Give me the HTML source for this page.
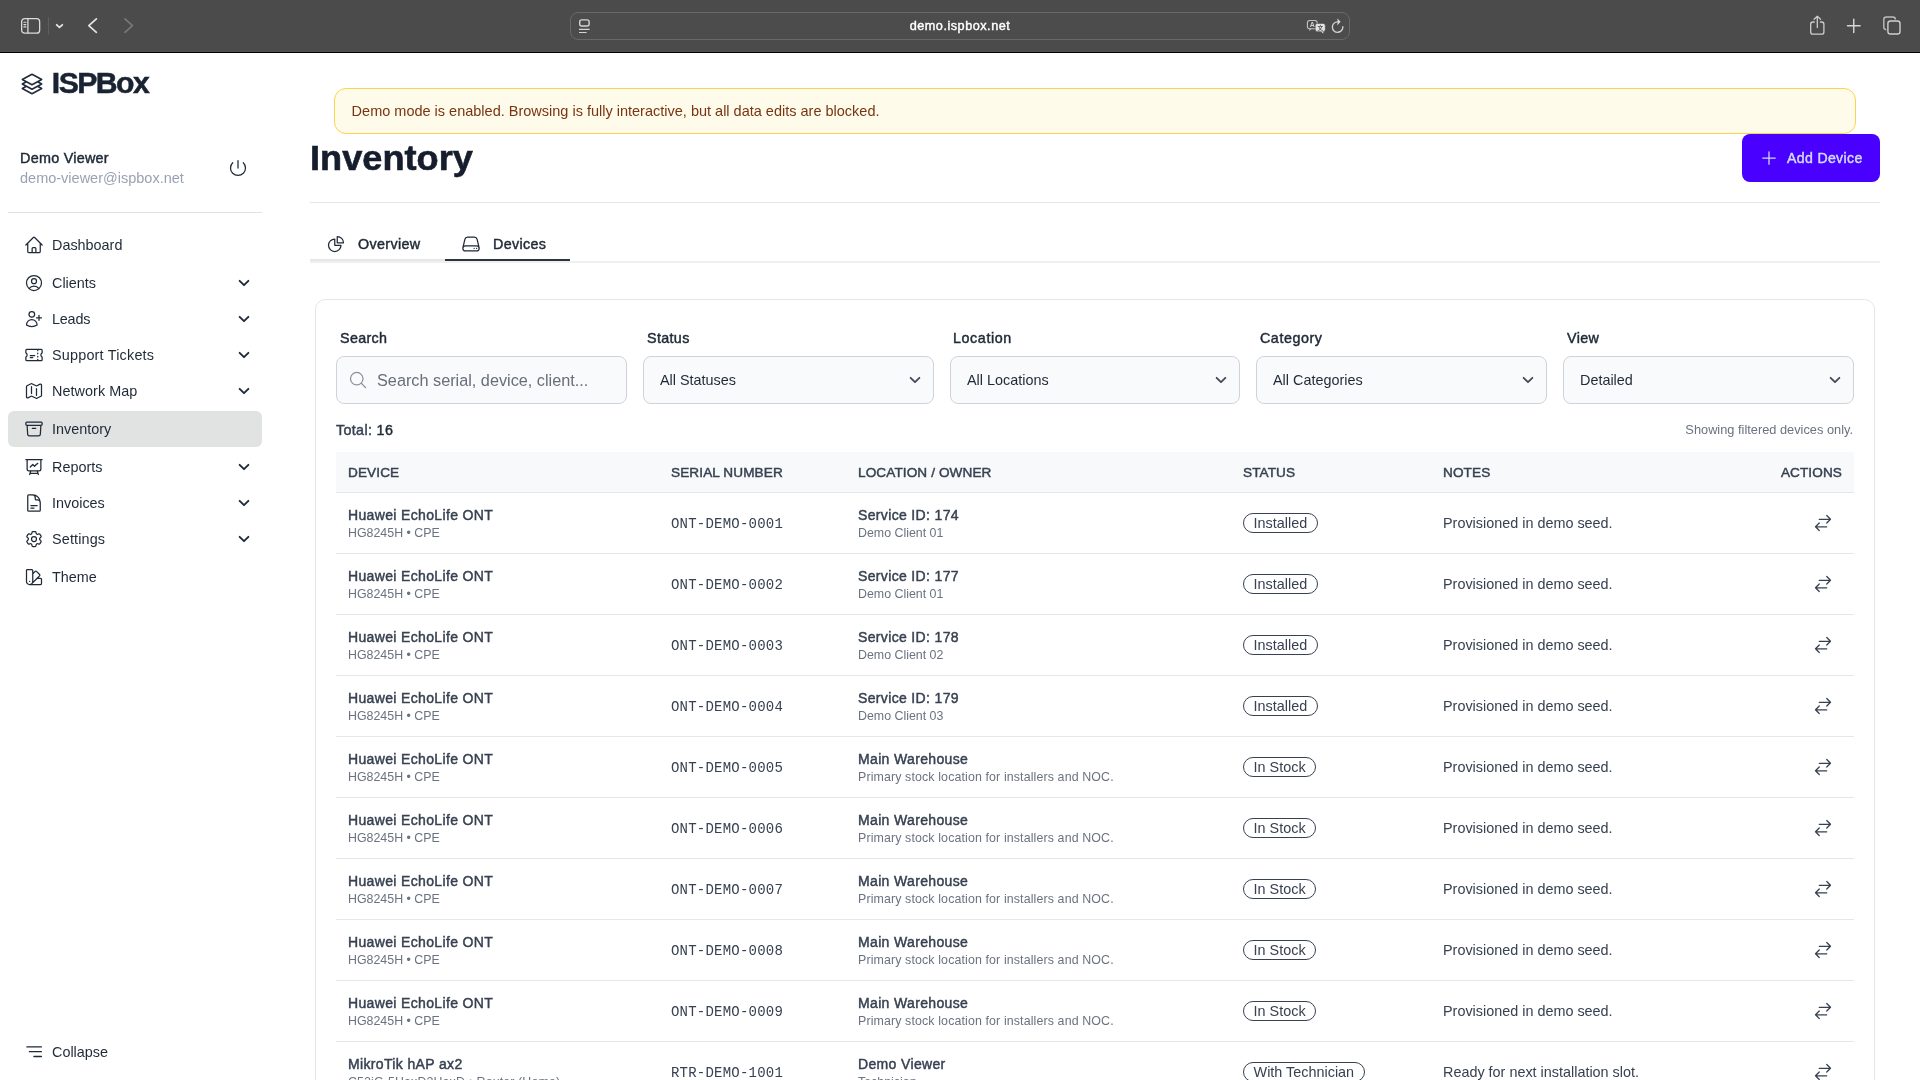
<!DOCTYPE html>
<html lang="en">
<head>
<meta charset="utf-8">
<title>Inventory - ISPBox</title>
<style>
*{box-sizing:border-box;margin:0;padding:0}
html,body{width:1920px;height:1080px;overflow:hidden;background:#fff}
body{font-family:"Liberation Sans",Arial,sans-serif;color:#1f2937;font-size:14px;position:relative;will-change:transform}
.abs{position:absolute}
svg{display:block}
.ico{fill:none;stroke:currentColor;stroke-width:1.5;stroke-linecap:round;stroke-linejoin:round}
/* browser chrome */
#chrome{position:absolute;left:0;top:0;width:1920px;height:53px;background:#4b4b4b;border-bottom:1px solid #000;box-shadow:inset 0 -1px 0 #515151}
#urlbar{position:absolute;left:570px;top:12px;width:780px;height:28px;border-radius:8px;background:#4c4c4c;border:1px solid #686868}
#url{position:absolute;left:570px;top:13px;width:780px;height:26px;line-height:26px;text-align:center;color:#fff;font-size:12.7px;font-weight:400;-webkit-text-stroke:.4px #fff;letter-spacing:.5px}
/* sidebar */
#logo{position:absolute;left:51.8px;top:63.5px;font-size:30.2px;line-height:38px;font-weight:700;letter-spacing:-1.55px;-webkit-text-stroke:.5px;color:#1a2332;white-space:nowrap}
.nav{position:absolute;left:8px;width:254px;height:36px;border-radius:6px;color:#1f2937}
.nav svg.ico{position:absolute;left:16px;top:8px;width:20px;height:20px}
.nav span{position:absolute;left:44px;top:0;line-height:36px;font-size:14.4px;white-space:nowrap}
.nav svg.chev{position:absolute;left:229px;top:11px;width:14px;height:14px;fill:none;stroke:#1f2937;stroke-width:3.2;stroke-linecap:round;stroke-linejoin:round}
.nav.active{background:#e1e3e2}

/* main */
#banner{position:absolute;left:334px;top:88px;width:1522px;height:46px;border-radius:12px;background:#fffbeb;border:1px solid #fcd34d;color:#78350f;font-size:14.5px;line-height:44px;padding-left:16.6px;white-space:nowrap}
#h1{position:absolute;left:310px;top:135.4px;font-size:34.4px;line-height:46px;font-weight:700;color:#161e2d;letter-spacing:0;-webkit-text-stroke:.6px;transform:scaleX(1.052);transform-origin:0 0;white-space:nowrap}
#addbtn{position:absolute;left:1742px;top:134px;width:138px;height:48px;border-radius:8px;background:#4a00ff;color:#d1dbff}
#addbtn span{position:absolute;left:45px;top:0;line-height:48px;font-size:14.1px;font-weight:400;-webkit-text-stroke:.45px;letter-spacing:.35px;white-space:nowrap}
.tab{position:absolute;top:226px;height:35px;border-bottom:2px solid #e6e7e7;font-size:14.3px;font-weight:400;-webkit-text-stroke:.45px;letter-spacing:.35px;color:#1f2937}
.tab svg{position:absolute;top:8px;width:20px;height:20px}
.tab span{position:absolute;top:0;line-height:36px;white-space:nowrap}
#card{position:absolute;left:315px;top:299px;width:1560px;height:800px;border:1px solid #e4e6eb;border-radius:10.5px;background:#fff}
.lbl{position:absolute;top:328px;line-height:20px;font-size:14.3px;font-weight:400;-webkit-text-stroke:.45px;letter-spacing:.35px;color:#1f2937;white-space:nowrap}
.inp{position:absolute;top:356px;width:291px;height:48px;border-radius:8px;border:1px solid #cfd3d9;background:#f9fafb;color:#1f2937}
.inp span{position:absolute;left:16px;top:0;line-height:46px;font-size:14.4px;white-space:nowrap}
.inp svg.chev{position:absolute;left:264px;top:16px;width:14px;height:14px;fill:none;stroke:#434a58;stroke-width:3.1;stroke-linecap:round;stroke-linejoin:round}

/* table */
#thead{position:absolute;left:336px;top:452px;width:1518px;height:41px;background:#f8f9fb;border-bottom:1px solid #e5e7eb}
#thead div{position:absolute;top:0;line-height:41px;font-size:13.6px;font-weight:400;-webkit-text-stroke:.45px;letter-spacing:.1px;color:#374151;white-space:nowrap}
.row{position:absolute;left:336px;width:1518px;height:61px;border-bottom:1px solid #e5e7eb}
.row div{position:absolute;white-space:nowrap}
.row .d1{left:12px;top:12px;line-height:20px;font-size:14px;font-weight:400;-webkit-text-stroke:.45px;letter-spacing:.35px;color:#374151}
.row .d2{left:12px;top:32px;line-height:16px;font-size:12.4px;color:#6b7280}
.row .sn{left:335px;top:21px;line-height:20px;font-size:14px;letter-spacing:.215px;font-family:"Liberation Mono","DejaVu Sans Mono",monospace;color:#374151}
.row .l1{left:522px;top:12px;line-height:20px;font-size:14px;font-weight:400;-webkit-text-stroke:.45px;letter-spacing:.35px;color:#374151}
.row .l2{left:522px;top:32px;line-height:16px;font-size:12.4px;color:#6b7280}
.row .bd{left:907px;top:20px;height:20px;border:1px solid #374151;border-radius:10px;line-height:18px;font-size:14.4px;color:#374151;padding:0 9.6px}
.row .nt{left:1107px;top:20px;line-height:20px;font-size:14.4px;color:#374151}
.row svg{position:absolute;left:1477px;top:20px;width:20px;height:20px;color:#374151}
.row .w{letter-spacing:.125px}
</style>
</head>
<body>
<!-- BROWSER CHROME -->
<div id="chrome">
  <svg class="abs" style="left:20px;top:17px" width="22" height="18" viewBox="0 0 22 18" fill="none" stroke="#dcdcdc" stroke-width="1.3"><rect x="1.65" y="1.65" width="18" height="14.5" rx="3"/><path d="M7.900 1.650v14.500"/><path d="M3.900 5.300h2M3.900 7.600h2M3.900 9.900h2" stroke-width="1.100" stroke-linecap="round"/></svg>
  <div class="abs" style="left:48px;top:17px;width:1px;height:18px;background:#5e5e5e"></div>
  <svg class="abs" style="left:55px;top:23px" width="9" height="6" viewBox="0 0 9 6" fill="none" stroke="#e4e4e4" stroke-width="1.8" stroke-linecap="round" stroke-linejoin="round"><path d="M1.700 1.800 4.500 4.300 7.300 1.800"/></svg>
  <svg class="abs" style="left:86px;top:17px" width="13" height="18" viewBox="0 0 13 18" fill="none" stroke="#e4e4e4" stroke-width="1.7" stroke-linecap="round" stroke-linejoin="round"><path d="M10.400 1.800 2.800 8.550l7.600 6.750"/></svg>
  <svg class="abs" style="left:122px;top:17px" width="13" height="18" viewBox="0 0 13 18" fill="none" stroke="#787878" stroke-width="1.7" stroke-linecap="round" stroke-linejoin="round"><path d="M2.900 1.800 10.500 8.550l-7.600 6.750"/></svg>
  <div id="urlbar"></div>
  <div id="url">demo.ispbox.net</div>
  <svg class="abs" style="left:578px;top:18px" width="14" height="17" viewBox="0 0 14 17" fill="none" stroke="#d4d4d4"><rect x="1.700" y="1.900" width="9.400" height="6.100" rx="1.900" stroke-width="1.400"/><path d="M1 11.400h10.600M1 14.500h7.600" stroke-width="1.200"/></svg>
  <svg class="abs" style="left:1306px;top:19px" width="21" height="16" viewBox="0 0 21 16" fill="none"><rect x="1.400" y="1.500" width="9.700" height="8.300" rx="2.200" stroke="#c4c4c4" stroke-width="1.100"/><path d="M3.300 9.800v2.100l2.300-2.100Z" fill="#c4c4c4"/><text x="6.250" y="8.300" font-family="Liberation Sans,sans-serif" font-size="7" font-weight="700" fill="#d0d0d0" text-anchor="middle">A</text><rect x="9.200" y="4.400" width="10.100" height="8.300" rx="2.200" fill="#e4e4e4" stroke="#4b4b4b" stroke-width=".6"/><path d="M17.300 12.500v2.100l-2.600-2.100Z" fill="#e4e4e4"/><text x="14.250" y="10.700" font-family="Noto Sans CJK SC,sans-serif" font-size="5.600" font-weight="700" fill="#555" text-anchor="middle">文</text></svg>
  <svg class="abs" style="left:1330px;top:17px" width="16" height="18" viewBox="0 0 16 18" fill="none"><path d="M12.850 9.700A5.250 5.250 0 1 1 7.600 4.800" stroke="#d2d2d2" stroke-width="1.350" stroke-linecap="round"/><path d="M7.200 1.200 10.500 4.700 7.200 8.400 7.900 4.800Z" fill="#dedede"/></svg>
  <svg class="abs" style="left:1808px;top:14px" width="19" height="22" viewBox="0 0 19 22" fill="none" stroke="#cdcdcd" stroke-width="1.300" stroke-linecap="round" stroke-linejoin="round"><path d="M6.300 8H4.900a2.200 2.200 0 0 0-2.200 2.200v7.800a2.200 2.200 0 0 0 2.200 2.200h8.800a2.200 2.200 0 0 0 2.200-2.200v-7.800A2.200 2.200 0 0 0 13.700 8H12.400"/><path d="M9.300 13.600V2.200M6.100 5.300 9.300 2.100l3.200 3.200"/></svg>
  <svg class="abs" style="left:1846px;top:18px" width="16" height="16" viewBox="0 0 16 16" fill="none" stroke="#d6d6d6" stroke-width="1.450" stroke-linecap="round"><path d="M7.750 1.200v13.400M1.500 7.800h12.600"/></svg>
  <svg class="abs" style="left:1882px;top:15px" width="20" height="21" viewBox="0 0 20 21" fill="none" stroke-linejoin="round"><rect x="1.800" y="2" width="11.600" height="12.700" rx="2.600" stroke="#bdbdbd" stroke-width="1.400"/><rect x="5.900" y="6" width="12.100" height="13" rx="2.600" fill="#4b4b4b" stroke="#4b4b4b" stroke-width="3.200"/><rect x="5.900" y="6" width="12.100" height="13" rx="2.600" stroke="#cfcfcf" stroke-width="1.400"/></svg>
</div>

<!-- SIDEBAR -->
<svg class="ico abs" style="left:20px;top:72px;width:24px;height:24px;color:#1f2937;stroke-width:1.45" viewBox="0 0 24 24"><path d="M6.429 9.75 2.25 12l4.179 2.25m0-4.5 5.571 3 5.571-3m-11.142 0L2.25 7.5 12 2.25l9.750 5.25-4.179 2.25m0 0L21.750 12l-4.179 2.25m0 0 4.179 2.250L12 21.750 2.250 16.500l4.179-2.250m11.142 0-5.571 3-5.571-3"/></svg>
<div id="logo">ISPBox</div>
<div class="abs" style="left:20px;top:148px;font-size:14.4px;line-height:20px;font-weight:400;-webkit-text-stroke:.45px;letter-spacing:.25px;color:#1f2937;white-space:nowrap">Demo Viewer</div>
<div class="abs" style="left:20px;top:168px;font-size:14.5px;line-height:20px;color:#9aa2b1;white-space:nowrap">demo-viewer@ispbox.net</div>
<svg class="ico abs" style="left:228px;top:158px;width:20px;height:20px;color:#1f2937" viewBox="0 0 24 24"><path d="M5.636 5.636a9 9 0 1 0 12.728 0M12 3v9"/></svg>
<div class="abs" style="left:8px;top:212px;width:254px;height:1px;background:#dfe2ea"></div>

<div class="nav" style="top:227px"><svg class="ico" viewBox="0 0 24 24"><path d="m2.250 12 8.954-8.955c.44-.439 1.152-.439 1.591 0L21.750 12M4.500 9.750v10.125c0 .621.504 1.125 1.125 1.125H9.750v-4.875c0-.621.504-1.125 1.125-1.125h2.250c.621 0 1.125.504 1.125 1.125V21h4.125c.621 0 1.125-.504 1.125-1.125V9.750M8.250 21h8.250"/></svg><span>Dashboard</span></div>
<div class="nav" style="top:265px"><svg class="ico" viewBox="0 0 24 24"><path d="M17.982 18.725A7.488 7.488 0 0 0 12 15.750a7.488 7.488 0 0 0-5.982 2.975m11.963 0a9 9 0 1 0-11.963 0m11.963 0A8.966 8.966 0 0 1 12 21a8.966 8.966 0 0 1-5.982-2.275M15 9.750a3 3 0 1 1-6 0 3 3 0 0 1 6 0Z"/></svg><span>Clients</span><svg class="chev" viewBox="0 0 24 24"><path d="m19.500 8.250-7.500 7.500-7.500-7.500"/></svg></div>
<div class="nav" style="top:301px"><svg class="ico" viewBox="0 0 24 24"><path d="M18 7.500v3m0 0v3m0-3h3m-3 0h-3m-2.250-4.125a3.375 3.375 0 1 1-6.750 0 3.375 3.375 0 0 1 6.750 0ZM3 19.235v-.110a6.375 6.375 0 0 1 12.750 0v.109A12.318 12.318 0 0 1 9.374 21c-2.331 0-4.512-.645-6.374-1.766Z"/></svg><span style="letter-spacing:-.2px">Leads</span><svg class="chev" viewBox="0 0 24 24"><path d="m19.500 8.250-7.500 7.500-7.500-7.500"/></svg></div>
<div class="nav" style="top:337px"><svg class="ico" viewBox="0 0 24 24"><path d="M16.500 6v.750m0 3v.750m0 3v.750m0 3V18m-9-5.250h5.250M7.500 15h3M3.375 5.250c-.621 0-1.125.504-1.125 1.125v3.026a2.999 2.999 0 0 1 0 5.198v3.026c0 .621.504 1.125 1.125 1.125h17.250c.621 0 1.125-.504 1.125-1.125v-3.026a2.999 2.999 0 0 1 0-5.198V6.375c0-.621-.504-1.125-1.125-1.125H3.375Z"/></svg><span style="letter-spacing:.2px">Support Tickets</span><svg class="chev" viewBox="0 0 24 24"><path d="m19.500 8.250-7.500 7.500-7.500-7.500"/></svg></div>
<div class="nav" style="top:373px"><svg class="ico" viewBox="0 0 24 24"><path d="M9 6.750V15m6-6v8.250m.503 3.498 4.875-2.437c.381-.190.622-.580.622-1.006V4.820c0-.836-.880-1.380-1.628-1.006l-3.869 1.934c-.317.159-.690.159-1.006 0L9.503 3.252a1.125 1.125 0 0 0-1.006 0L3.622 5.689C3.240 5.880 3 6.270 3 6.695V19.180c0 .836.880 1.380 1.628 1.006l3.869-1.934c.317-.159.690-.159 1.006 0l4.994 2.497c.317.158.690.158 1.006 0Z"/></svg><span style="letter-spacing:.06px">Network Map</span><svg class="chev" viewBox="0 0 24 24"><path d="m19.500 8.250-7.500 7.500-7.500-7.500"/></svg></div>
<div class="nav active" style="top:411px"><svg class="ico" viewBox="0 0 24 24"><path d="m20.250 7.500-.625 10.632a2.250 2.250 0 0 1-2.247 2.118H6.622a2.250 2.250 0 0 1-2.247-2.118L3.750 7.500M10 11.250h4M3.375 7.500h17.250c.621 0 1.125-.504 1.125-1.125v-1.500c0-.621-.504-1.125-1.125-1.125H3.375c-.621 0-1.125.504-1.125 1.125v1.500c0 .621.504 1.125 1.125 1.125Z"/></svg><span>Inventory</span></div>
<div class="nav" style="top:449px"><svg class="ico" viewBox="0 0 24 24"><path d="M3.750 3v11.250A2.250 2.250 0 0 0 6 16.500h2.250M3.750 3h-1.500m1.500 0h16.500m0 0h1.500m-1.500 0v11.250A2.250 2.250 0 0 1 18 16.500h-2.250m-7.500 0h7.500m-7.500 0-1 3m8.500-3 1 3m0 0 .5 1.500m-.5-1.500h-9.500m0 0-.5 1.500m.750-9 3-3 2.148 2.148A12.061 12.061 0 0 1 16.500 7.605"/></svg><span>Reports</span><svg class="chev" viewBox="0 0 24 24"><path d="m19.500 8.250-7.500 7.500-7.500-7.500"/></svg></div>
<div class="nav" style="top:485px"><svg class="ico" viewBox="0 0 24 24"><path d="M19.500 14.250v-2.625a3.375 3.375 0 0 0-3.375-3.375h-1.500A1.125 1.125 0 0 1 13.500 7.125v-1.500a3.375 3.375 0 0 0-3.375-3.375H8.250m0 12.750h7.500m-7.500 3H12M10.500 2.250H5.625c-.621 0-1.125.504-1.125 1.125v17.250c0 .621.504 1.125 1.125 1.125h12.750c.621 0 1.125-.504 1.125-1.125V11.250a9 9 0 0 0-9-9Z"/></svg><span>Invoices</span><svg class="chev" viewBox="0 0 24 24"><path d="m19.500 8.250-7.500 7.500-7.500-7.500"/></svg></div>
<div class="nav" style="top:521px"><svg class="ico" viewBox="0 0 24 24"><path d="M9.594 3.940c.090-.542.560-.940 1.110-.940h2.593c.550 0 1.020.398 1.110.940l.213 1.281c.063.374.313.686.645.870.074.040.147.083.220.127.325.196.720.257 1.075.124l1.217-.456a1.125 1.125 0 0 1 1.370.490l1.296 2.247a1.125 1.125 0 0 1-.260 1.431l-1.003.827c-.293.241-.438.613-.430.992a7.723 7.723 0 0 1 0 .255c-.008.378.137.750.430.991l1.004.827c.424.350.534.955.260 1.430l-1.298 2.247a1.125 1.125 0 0 1-1.369.491l-1.217-.456c-.355-.133-.750-.072-1.076.124a6.470 6.470 0 0 1-.220.128c-.331.183-.581.495-.644.869l-.213 1.281c-.090.543-.560.940-1.110.940h-2.594c-.550 0-1.019-.398-1.110-.940l-.213-1.281c-.062-.374-.312-.686-.644-.870a6.520 6.520 0 0 1-.220-.127c-.325-.196-.720-.257-1.076-.124l-1.217.456a1.125 1.125 0 0 1-1.369-.490l-1.297-2.247a1.125 1.125 0 0 1 .260-1.431l1.004-.827c.292-.240.437-.613.430-.991a6.932 6.932 0 0 1 0-.255c.007-.380-.138-.751-.430-.992l-1.004-.827a1.125 1.125 0 0 1-.260-1.430l1.297-2.247a1.125 1.125 0 0 1 1.370-.491l1.216.456c.356.133.751.072 1.076-.124.072-.044.146-.086.220-.128.332-.183.582-.495.644-.869l.214-1.280Z"/><path d="M15 12a3 3 0 1 1-6 0 3 3 0 0 1 6 0Z"/></svg><span style="letter-spacing:.15px">Settings</span><svg class="chev" viewBox="0 0 24 24"><path d="m19.500 8.250-7.500 7.500-7.500-7.500"/></svg></div>
<div class="nav" style="top:559px"><svg class="ico" viewBox="0 0 24 24"><path d="M4.098 19.902a3.750 3.750 0 0 0 5.304 0l6.401-6.402M6.750 21A3.750 3.750 0 0 1 3 17.250V4.125C3 3.504 3.504 3 4.125 3h5.250c.621 0 1.125.504 1.125 1.125v4.072M6.750 21a3.750 3.750 0 0 0 3.750-3.750V8.197M6.750 21h13.125c.621 0 1.125-.504 1.125-1.125v-5.250c0-.621-.504-1.125-1.125-1.125h-4.072M10.500 8.197l2.880-2.880c.438-.439 1.150-.439 1.590 0l3.712 3.713c.440.440.440 1.152 0 1.590l-2.879 2.880M6.750 17.250h.008v.008H6.750v-.008Z"/></svg><span>Theme</span></div>
<div class="nav" style="top:1034px"><svg class="abs" style="left:17px;top:11px" width="18" height="14" viewBox="0 0 18 14" fill="none" stroke="#1f2937" stroke-width="1.3" stroke-linecap="round"><path d="M1.900 1.900h14.500M4.400 6.700h12M8.900 11.500h7.500"/></svg><span>Collapse</span></div>


<!-- MAIN -->
<div id="banner">Demo mode is enabled. Browsing is fully interactive, but all data edits are blocked.</div>
<div id="h1">Inventory</div>
<div id="addbtn"><svg class="ico abs" style="left:17px;top:14px;width:20px;height:20px" viewBox="0 0 24 24"><path d="M12 4.500v15m7.500-7.500h-15"/></svg><span>Add Device</span></div>
<div class="abs" style="left:310px;top:202px;width:1570px;height:1px;background:#e5e7eb"></div>
<div class="abs" style="left:310px;top:261px;width:1570px;height:2px;background:#eeefef"></div>
<div class="tab" style="left:310px;width:135px"><svg class="ico" style="left:16px" viewBox="0 0 24 24"><path d="M10.500 6a7.500 7.500 0 1 0 7.500 7.500h-7.500V6Z"/><path d="M13.500 10.500H21A7.500 7.500 0 0 0 13.500 3v7.500Z"/></svg><span style="left:48px">Overview</span></div>
<div class="tab" style="left:445px;width:125px;border-bottom:2px solid #2a3443"><svg class="ico" style="left:16px" viewBox="0 0 24 24"><path d="M21.750 17.250v-.228a4.500 4.500 0 0 0-.120-1.030l-2.268-9.640a3.375 3.375 0 0 0-3.285-2.602H7.923a3.375 3.375 0 0 0-3.285 2.602l-2.268 9.640a4.500 4.500 0 0 0-.120 1.030v.228m19.500 0a3 3 0 0 1-3 3H5.250a3 3 0 0 1-3-3m19.500 0a3 3 0 0 0-3-3H5.250a3 3 0 0 0-3 3m16.500 0h.008v.008h-.008v-.008Zm-3 0h.008v.008h-.008v-.008Z"/></svg><span style="left:48px">Devices</span></div>

<div id="card"></div>
<div class="lbl" style="left:340px">Search</div>
<div class="lbl" style="left:647px">Status</div>
<div class="lbl" style="left:953px;letter-spacing:.6px">Location</div>
<div class="lbl" style="left:1260px;letter-spacing:.55px">Category</div>
<div class="lbl" style="left:1567px">View</div>
<div class="inp" style="left:336px"><svg class="ico abs" style="left:10.6px;top:13px;width:20px;height:20px;color:#8b919c" viewBox="0 0 24 24"><path d="m21 21-5.197-5.197m0 0A7.500 7.500 0 1 0 5.196 5.196a7.500 7.500 0 0 0 10.607 10.607Z"/></svg><span style="left:40px;font-size:16.25px;color:#686e7a">Search serial, device, client...</span></div>
<div class="inp" style="left:643px"><span>All Statuses</span><svg class="chev" viewBox="0 0 24 24"><path d="m19.500 8.250-7.500 7.500-7.500-7.500"/></svg></div>
<div class="inp" style="left:950px;width:290px"><span>All Locations</span><svg class="chev" style="left:263px" viewBox="0 0 24 24"><path d="m19.500 8.250-7.500 7.500-7.500-7.500"/></svg></div>
<div class="inp" style="left:1256px"><span>All Categories</span><svg class="chev" viewBox="0 0 24 24"><path d="m19.500 8.250-7.500 7.500-7.500-7.500"/></svg></div>
<div class="inp" style="left:1563px"><span>Detailed</span><svg class="chev" viewBox="0 0 24 24"><path d="m19.500 8.250-7.500 7.500-7.500-7.500"/></svg></div>
<div class="abs" style="left:336px;top:420px;line-height:20px;font-size:14.3px;font-weight:400;-webkit-text-stroke:.45px;letter-spacing:.35px;color:#374151;white-space:nowrap">Total: <span style="color:#1f2937">16</span></div>
<div class="abs" style="right:67px;top:422px;line-height:16px;font-size:12.8px;color:#6b7280;white-space:nowrap">Showing filtered devices only.</div>
<div id="thead"><div style="left:12px">DEVICE</div><div style="left:335px">SERIAL NUMBER</div><div style="left:522px">LOCATION / OWNER</div><div style="left:907px">STATUS</div><div style="left:1107px">NOTES</div><div style="right:12px">ACTIONS</div></div>
<div class="row" style="top:493px"><div class="d1">Huawei EchoLife ONT</div><div class="d2">HG8245H • CPE</div><div class="sn">ONT-DEMO-0001</div><div class="l1">Service ID: 174</div><div class="l2">Demo Client 01</div><div class="bd">Installed</div><div class="nt">Provisioned in demo seed.</div><svg class="ico" viewBox="0 0 24 24"><path d="M7.500 21 3 16.500m0 0L7.500 12M3 16.500h13.500m0-13.500L21 7.500m0 0L16.500 12M21 7.500H7.500"/></svg></div>
<div class="row" style="top:554px"><div class="d1">Huawei EchoLife ONT</div><div class="d2">HG8245H • CPE</div><div class="sn">ONT-DEMO-0002</div><div class="l1">Service ID: 177</div><div class="l2">Demo Client 01</div><div class="bd">Installed</div><div class="nt">Provisioned in demo seed.</div><svg class="ico" viewBox="0 0 24 24"><path d="M7.500 21 3 16.500m0 0L7.500 12M3 16.500h13.500m0-13.500L21 7.500m0 0L16.500 12M21 7.500H7.500"/></svg></div>
<div class="row" style="top:615px"><div class="d1">Huawei EchoLife ONT</div><div class="d2">HG8245H • CPE</div><div class="sn">ONT-DEMO-0003</div><div class="l1">Service ID: 178</div><div class="l2">Demo Client 02</div><div class="bd">Installed</div><div class="nt">Provisioned in demo seed.</div><svg class="ico" viewBox="0 0 24 24"><path d="M7.500 21 3 16.500m0 0L7.500 12M3 16.500h13.500m0-13.500L21 7.500m0 0L16.500 12M21 7.500H7.500"/></svg></div>
<div class="row" style="top:676px"><div class="d1">Huawei EchoLife ONT</div><div class="d2">HG8245H • CPE</div><div class="sn">ONT-DEMO-0004</div><div class="l1">Service ID: 179</div><div class="l2">Demo Client 03</div><div class="bd">Installed</div><div class="nt">Provisioned in demo seed.</div><svg class="ico" viewBox="0 0 24 24"><path d="M7.500 21 3 16.500m0 0L7.500 12M3 16.500h13.500m0-13.500L21 7.500m0 0L16.500 12M21 7.500H7.500"/></svg></div>
<div class="row" style="top:737px"><div class="d1">Huawei EchoLife ONT</div><div class="d2">HG8245H • CPE</div><div class="sn">ONT-DEMO-0005</div><div class="l1">Main Warehouse</div><div class="l2 w">Primary stock location for installers and NOC.</div><div class="bd">In Stock</div><div class="nt">Provisioned in demo seed.</div><svg class="ico" viewBox="0 0 24 24"><path d="M7.500 21 3 16.500m0 0L7.500 12M3 16.500h13.500m0-13.500L21 7.500m0 0L16.500 12M21 7.500H7.500"/></svg></div>
<div class="row" style="top:798px"><div class="d1">Huawei EchoLife ONT</div><div class="d2">HG8245H • CPE</div><div class="sn">ONT-DEMO-0006</div><div class="l1">Main Warehouse</div><div class="l2 w">Primary stock location for installers and NOC.</div><div class="bd">In Stock</div><div class="nt">Provisioned in demo seed.</div><svg class="ico" viewBox="0 0 24 24"><path d="M7.500 21 3 16.500m0 0L7.500 12M3 16.500h13.500m0-13.500L21 7.500m0 0L16.500 12M21 7.500H7.500"/></svg></div>
<div class="row" style="top:859px"><div class="d1">Huawei EchoLife ONT</div><div class="d2">HG8245H • CPE</div><div class="sn">ONT-DEMO-0007</div><div class="l1">Main Warehouse</div><div class="l2 w">Primary stock location for installers and NOC.</div><div class="bd">In Stock</div><div class="nt">Provisioned in demo seed.</div><svg class="ico" viewBox="0 0 24 24"><path d="M7.500 21 3 16.500m0 0L7.500 12M3 16.500h13.500m0-13.500L21 7.500m0 0L16.500 12M21 7.500H7.500"/></svg></div>
<div class="row" style="top:920px"><div class="d1">Huawei EchoLife ONT</div><div class="d2">HG8245H • CPE</div><div class="sn">ONT-DEMO-0008</div><div class="l1">Main Warehouse</div><div class="l2 w">Primary stock location for installers and NOC.</div><div class="bd">In Stock</div><div class="nt">Provisioned in demo seed.</div><svg class="ico" viewBox="0 0 24 24"><path d="M7.500 21 3 16.500m0 0L7.500 12M3 16.500h13.500m0-13.500L21 7.500m0 0L16.500 12M21 7.500H7.500"/></svg></div>
<div class="row" style="top:981px"><div class="d1">Huawei EchoLife ONT</div><div class="d2">HG8245H • CPE</div><div class="sn">ONT-DEMO-0009</div><div class="l1">Main Warehouse</div><div class="l2 w">Primary stock location for installers and NOC.</div><div class="bd">In Stock</div><div class="nt">Provisioned in demo seed.</div><svg class="ico" viewBox="0 0 24 24"><path d="M7.500 21 3 16.500m0 0L7.500 12M3 16.500h13.500m0-13.500L21 7.500m0 0L16.500 12M21 7.500H7.500"/></svg></div>
<div class="row" style="top:1042px"><div class="d1">MikroTik hAP ax2</div><div class="d2 w">C52iG-5HaxD2HaxD • Router (Home)</div><div class="sn">RTR-DEMO-1001</div><div class="l1">Demo Viewer</div><div class="l2">Technician</div><div class="bd">With Technician</div><div class="nt">Ready for next installation slot.</div><svg class="ico" viewBox="0 0 24 24"><path d="M7.500 21 3 16.500m0 0L7.500 12M3 16.500h13.500m0-13.500L21 7.500m0 0L16.500 12M21 7.500H7.500"/></svg></div>


</body>
</html>
